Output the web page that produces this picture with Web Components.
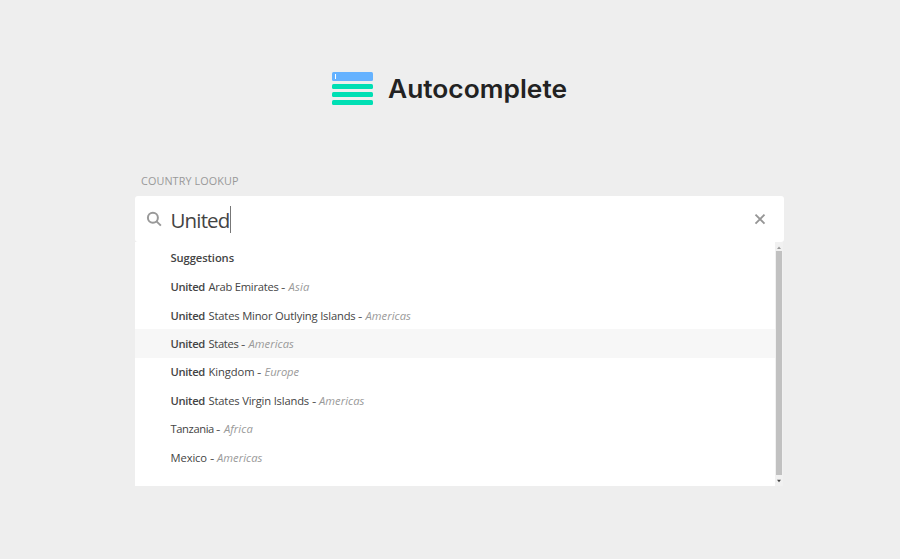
<!DOCTYPE html>
<html lang="en"><head><meta charset="utf-8"><title>Autocomplete</title>
<style>body{margin:0;background:#eee;font-family:"Open Sans","Noto Sans",sans-serif}</style></head>
<body><autocomplete-demo></autocomplete-demo>
<script>
const attach=(el,html)=>{el.attachShadow({mode:'open'}).innerHTML=html};

/* A run of text that fills the given width, by letter spacing or, with "stretch", by scaling. */
customElements.define('fit-text',class extends HTMLElement{
  connectedCallback(){
    attach(this,`<style>:host{display:inline-block;white-space:pre}span{display:inline-block;transform-origin:0 50%}</style><span><slot></slot></span>`);
    const s=this.shadowRoot.querySelector('span'),w=+this.getAttribute('w');
    const n=this.textContent.length,natural=s.getBoundingClientRect().width;
    this.style.width=w+'px';
    if(this.hasAttribute('stretch'))s.style.transform=`scaleX(${w/natural})`;
    else s.style.letterSpacing=((w-natural)/n)+'px';
  }});

customElements.define('brand-header',class extends HTMLElement{
  connectedCallback(){attach(this,`<style>
  :host{display:flex;align-items:flex-start;padding:72px 0 0 332px;height:101px;box-sizing:content-box}
  svg{display:block;width:41px;height:33px}
  h1{margin:0 0 0 14.8px;font:600 25px/34px Inter,sans-serif;color:#222}
  </style>
  <svg viewBox="0 0 41 33"><rect width="41" height="9" rx="1.5" fill="#65b2ff"/><rect x="3" y="2" width="1" height="5" fill="#fff"/>
  <g fill="#00dfb4"><rect y="12" width="41" height="5" rx="1.5"/><rect y="20" width="41" height="5" rx="1.5"/><rect y="28" width="41" height="5" rx="1.5"/></g></svg>
  <h1><fit-text stretch w="179">Autocomplete</fit-text></h1>`)}});

customElements.define('search-field',class extends HTMLElement{
  connectedCallback(){attach(this,`<style>
  :host{display:flex;box-sizing:border-box;height:46px;padding:0 18px 0 11px;background:#fff;border-radius:3px;align-items:flex-start}
  .mag{width:16px;height:16px;margin-top:15px}
  .q{margin-left:8.5px;padding-top:10px;font-size:20.5px;line-height:28px;color:#444;flex:none}
  .caret{width:1px;height:27px;margin-top:10px;background:#777}
  .x{width:12px;height:12px;margin:17px 0 0 auto}
  </style>
  <svg class="mag" viewBox="0 0 16 16" fill="none" stroke="#999" stroke-width="2"><circle cx="6.9" cy="6.8" r="5"/><path d="M10.5 10.4 14.9 14.6"/></svg>
  <span class="q"><slot></slot></span><span class="caret"></span>
  <svg class="x" viewBox="0 0 12 12" stroke="#969696" stroke-width="1.9"><path d="M1.5 1.7 10.5 10.7M10.5 1.7 1.5 10.7"/></svg>`)}});

customElements.define('suggestion-item',class extends HTMLElement{
  connectedCallback(){attach(this,`<style>
  :host{display:flex;box-sizing:border-box;height:28.4px;padding:.95px 0 0 35.5px;font-size:11.2px;line-height:28.8px;color:#444}
  :host([active]){background:#f7f7f7}
  ::slotted(b){font-weight:600;margin-right:3.5px}
  ::slotted(span.dash){margin-left:2.5px}
  ::slotted(i){color:#999;margin-left:3.2px}
  </style><slot></slot>`)}});

customElements.define('scroll-bar',class extends HTMLElement{
  connectedCallback(){attach(this,`<style>
  :host{display:flex;flex-direction:column;align-items:center;width:8px;background:#f1f1f1}
  svg{width:6px;height:9px;flex:none}.thumb{width:6px;flex:1;background:#c1c1c1}svg:last-child{height:11px}
  </style><svg viewBox="0 0 6 9"><path d="M1 7 3 4.5 5 7z" fill="#999"/></svg><div class="thumb"></div>
  <svg viewBox="0 0 6 11"><path d="M1 4.8 5 4.8 3 7.2z" fill="#444"/></svg>`)}});

customElements.define('suggestion-list',class extends HTMLElement{
  connectedCallback(){attach(this,`<style>
  :host{display:flex;height:244px;width:648px;background:#fff}
  .items{flex:1;padding-top:.8px}
  </style><div class="items"><slot></slot></div><scroll-bar></scroll-bar>`)}});

customElements.define('autocomplete-demo',class extends HTMLElement{
  connectedCallback(){
    const rows=[['United',34.5,'Arab Emirates',70,'Asia',21],['United',34.5,'States Minor Outlying Islands',147,'Americas',45.5],
    ['United',34.5,'States',30,'Americas',45.5,1],['United',34.5,'Kingdom',46,'Europe',34.5],
    ['United',34.5,'States Virgin Islands',100.5,'Americas',45.5],['',0,'Tanzania',43.4,'Africa',29],['',0,'Mexico',36.5,'Americas',45.5]];
    attach(this,`<style>
    :host{display:block;width:900px;height:559px;overflow:hidden;background:#eee}
    main{width:649px;margin-left:135px}
    .label{font-size:10.8px;line-height:16px;color:#999;padding-left:6px;height:23px}
    .head{margin-bottom:1.2px}
    </style><brand-header></brand-header><main>
    <div class="label"><fit-text w="97.5">COUNTRY LOOKUP</fit-text></div>
    <search-field><fit-text w="59">United</fit-text></search-field>
    <suggestion-list><suggestion-item class="head"><b><fit-text w="63.5">Suggestions</fit-text></b></suggestion-item>
    ${rows.map(r=>`<suggestion-item${r[6]?' active':''}>${r[0]?`<b><fit-text w="${r[1]}">${r[0]}</fit-text></b>`:''}<span><fit-text w="${r[3]}">${r[2]}</fit-text></span><span class="dash"><fit-text stretch w="4.3">-</fit-text></span><i><fit-text w="${r[5]}">${r[4]}</fit-text></i></suggestion-item>`).join('')}
    </suggestion-list></main>`)}});
</script></body></html>
